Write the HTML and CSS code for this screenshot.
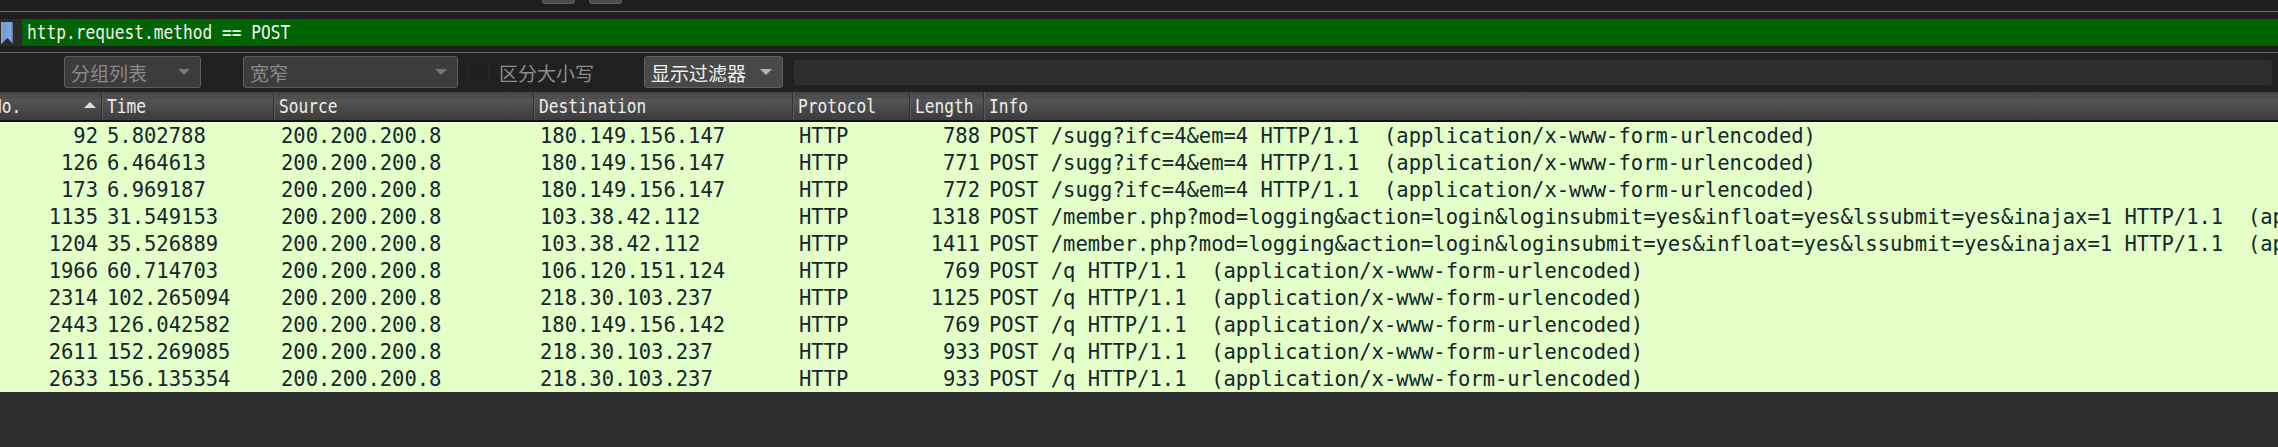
FILE: index.html
```html
<!DOCTYPE html>
<html lang="zh">
<head>
<meta charset="utf-8">
<title>Wireshark</title>
<link rel="stylesheet" href="styles.css">
</head>
<body>
<div class="app">
  <div class="topbar">
    <span class="stub stub-a"></span>
    <span class="stub stub-b"></span>
  </div>
  <div class="filterbar">
    <div class="bookmark-box">
      <svg class="bookmark" viewBox="0 0 14 24" width="14" height="24" aria-hidden="true">
        <defs>
          <linearGradient id="rb" x1="0" x2="1" y1="0" y2="0">
            <stop offset="0" stop-color="#a3a7ae"/>
            <stop offset="0.22" stop-color="#6f9ad6"/>
            <stop offset="0.8" stop-color="#7fa9e0"/>
            <stop offset="1" stop-color="#5a6f8c"/>
          </linearGradient>
        </defs>
        <path d="M1 1H13V23L7.5 17L1 23Z" fill="url(#rb)"/>
      </svg>
    </div>
    <div class="filter-input"><span class="squeeze">http.request.method == POST</span></div>
  </div>
  <div class="toolbar">
    <div class="combo combo-a disabled"><span>分组列表</span><i class="caret"></i></div>
    <div class="combo combo-b disabled"><span>宽窄</span><i class="caret"></i></div>
    <span class="check"></span>
    <span class="check-label">区分大小写</span>
    <div class="combo combo-c"><span>显示过滤器</span><i class="caret"></i></div>
    <div class="search"></div>
  </div>
  <div class="table">
    <div class="row head">
      <div class="cell no-h"><span class="squeeze">No.</span><i class="sort"></i></div>
      <div class="cell"><span class="squeeze">Time</span></div>
      <div class="cell"><span class="squeeze">Source</span></div>
      <div class="cell"><span class="squeeze">Destination</span></div>
      <div class="cell"><span class="squeeze">Protocol</span></div>
      <div class="cell"><span class="squeeze">Length</span></div>
      <div class="cell"><span class="squeeze">Info</span></div>
    </div>
    <div class="row pkt"><div class="num">92</div><div>5.802788</div><div>200.200.200.8</div><div>180.149.156.147</div><div>HTTP</div><div class="num">788</div><div>POST /sugg?ifc=4&amp;em=4 HTTP/1.1  (application/x-www-form-urlencoded)</div></div>
    <div class="row pkt"><div class="num">126</div><div>6.464613</div><div>200.200.200.8</div><div>180.149.156.147</div><div>HTTP</div><div class="num">771</div><div>POST /sugg?ifc=4&amp;em=4 HTTP/1.1  (application/x-www-form-urlencoded)</div></div>
    <div class="row pkt"><div class="num">173</div><div>6.969187</div><div>200.200.200.8</div><div>180.149.156.147</div><div>HTTP</div><div class="num">772</div><div>POST /sugg?ifc=4&amp;em=4 HTTP/1.1  (application/x-www-form-urlencoded)</div></div>
    <div class="row pkt"><div class="num">1135</div><div>31.549153</div><div>200.200.200.8</div><div>103.38.42.112</div><div>HTTP</div><div class="num">1318</div><div>POST /member.php?mod=logging&amp;action=login&amp;loginsubmit=yes&amp;infloat=yes&amp;lssubmit=yes&amp;inajax=1 HTTP/1.1  (application/x-www-form-urlencoded)</div></div>
    <div class="row pkt"><div class="num">1204</div><div>35.526889</div><div>200.200.200.8</div><div>103.38.42.112</div><div>HTTP</div><div class="num">1411</div><div>POST /member.php?mod=logging&amp;action=login&amp;loginsubmit=yes&amp;infloat=yes&amp;lssubmit=yes&amp;inajax=1 HTTP/1.1  (application/x-www-form-urlencoded)</div></div>
    <div class="row pkt"><div class="num">1966</div><div>60.714703</div><div>200.200.200.8</div><div>106.120.151.124</div><div>HTTP</div><div class="num">769</div><div>POST /q HTTP/1.1  (application/x-www-form-urlencoded)</div></div>
    <div class="row pkt"><div class="num">2314</div><div>102.265094</div><div>200.200.200.8</div><div>218.30.103.237</div><div>HTTP</div><div class="num">1125</div><div>POST /q HTTP/1.1  (application/x-www-form-urlencoded)</div></div>
    <div class="row pkt"><div class="num">2443</div><div>126.042582</div><div>200.200.200.8</div><div>180.149.156.142</div><div>HTTP</div><div class="num">769</div><div>POST /q HTTP/1.1  (application/x-www-form-urlencoded)</div></div>
    <div class="row pkt"><div class="num">2611</div><div>152.269085</div><div>200.200.200.8</div><div>218.30.103.237</div><div>HTTP</div><div class="num">933</div><div>POST /q HTTP/1.1  (application/x-www-form-urlencoded)</div></div>
    <div class="row pkt"><div class="num">2633</div><div>156.135354</div><div>200.200.200.8</div><div>218.30.103.237</div><div>HTTP</div><div class="num">933</div><div>POST /q HTTP/1.1  (application/x-www-form-urlencoded)</div></div>
  </div>
</div>
</body>
</html>
```

FILE: styles.css
```css
* { box-sizing: border-box; }
html, body { margin: 0; height: 100%; overflow: hidden; background: #2e2e2e; }
.app {
  width: 2278px;
  height: 447px;
  display: flex;
  flex-direction: column;
  font-family: "DejaVu Sans Mono", monospace;
  overflow: hidden;
}
.topbar {
  height: 12px;
  background: #1e1e1e;
  border-bottom: 1px solid #6a6a6a;
  display: flex;
  align-items: flex-start;
  padding-left: 542px;
  gap: 14px;
}
.stub {
  width: 33px;
  height: 4px;
  background: #4c4c4c;
  border: 1px solid #5c5c5c;
  border-top: 0;
  border-radius: 0 0 3px 3px;
}
.filterbar {
  height: 41px;
  background: #1e1e1e;
  border-bottom: 1px solid #6a6a6a;
  display: flex;
  align-items: flex-start;
  padding-top: 7px;
}
.bookmark-box {
  flex: none;
  width: 22px;
  height: 27px;
  background: #2a2a2a;
  padding-top: 2px;
}
.bookmark { display: block; }
.filter-input {
  flex: 1;
  height: 27px;
  padding-left: 5px;
  background: #006400;
  color: #f2f2f2;
  font-size: 19px;
  line-height: 26px;
  white-space: pre;
}
.squeeze {
  display: inline-block;
  transform: scaleX(0.852);
  transform-origin: left center;
  white-space: pre;
}
.toolbar {
  height: 39px;
  background: #212121;
  display: flex;
  align-items: center;
  padding-left: 64px;
  padding-bottom: 1px;
  font-family: "Noto Sans CJK SC", sans-serif;
  font-size: 19px;
  color: #f0f0f0;
}
.combo {
  height: 32px;
  display: flex;
  align-items: center;
  justify-content: space-between;
  padding: 0 10px 0 6px;
  background: #484848;
  border: 1px solid #5e5e5e;
  border-radius: 3px;
}
.combo.disabled { color: #8a8a8a; background: #3c3c3c; }
.combo-a { width: 137px; }
.combo-b { width: 215px; margin-left: 42px; }
.combo-c { width: 139px; margin-left: 52px; }
.caret {
  width: 0;
  height: 0;
  border: 6px solid transparent;
  border-top: 6px solid #b4b4b4;
  border-bottom: 0;
}
.disabled .caret { border-top-color: #777; }
.check {
  width: 21px;
  height: 20px;
  margin-left: 10px;
  background: #1f1f1f;
  border: 1px solid #262626;
}
.check-label { margin-left: 10px; color: #8c8c8c; width: 93px; white-space: nowrap; }
.search {
  width: 1478px;
  height: 25px;
  margin-left: 11px;
  background: #2e2e2e;
  border-radius: 2px;
}
.table { flex: 1; display: flex; flex-direction: column; }
.row {
  display: grid;
  grid-template-columns: 102px 172px 260px 259px 117px 74px 1fr;
  white-space: pre;
}
.head {
  height: 30px;
  flex: none;
  background: linear-gradient(#444 0%, #545454 30%, #3c3c3c 100%);
  border-bottom: 2px solid #111;
  color: #eee;
  font-size: 19px;
  line-height: 28px;
}
.cell {
  position: relative;
  padding-left: 4px;
  border-right: 1px solid #333;
  border-left: 1px solid #5a5a5a;
  overflow: hidden;
}
.cell:last-child { border-right: 0; }
.no-h { padding-left: 0; border-left: 0; }
.no-h .squeeze { margin-left: -8px; }
.sort {
  position: absolute;
  left: 84px;
  top: 10px;
  width: 0;
  height: 0;
  border: 6px solid transparent;
  border-bottom: 6px solid #ddd;
  border-top: 0;
}
.pkt {
  height: 27px;
  flex: none;
  grid-template-rows: 27px;
  background: #e4ffc7;
  color: #12272e;
  font-size: 20.5px;
  line-height: 27px;
}
.pkt > div { padding: 1px 0 0 7px; overflow: hidden; }
.pkt > .num { padding: 1px 4px 0 0; text-align: right; }
.pkt > div:nth-child(2) { padding-left: 5px; }
.pkt > div:nth-child(4) { padding-left: 6px; }
.pkt > div:nth-child(5) { padding-left: 6px; }
.pkt > div:last-child { overflow: visible; padding-left: 5px; }
```
